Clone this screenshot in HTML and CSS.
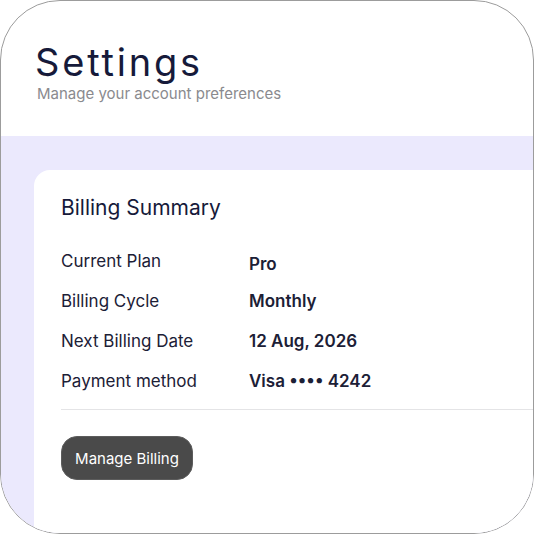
FILE: index.html
```html
<!DOCTYPE html>
<html>
<head>
<meta charset="utf-8">
<link rel="stylesheet" href="styles.css">
</head>
<body>
<div class="frame">
  <header class="page-header">
    <h1 class="title">Settings</h1>
    <p class="subtitle">Manage your account preferences</p>
  </header>
  <main class="content">
    <section class="card">
      <h2 class="card-title">Billing Summary</h2>
      <dl class="rows">
        <div class="row"><dt>Current Plan</dt><dd class="first">Pro</dd></div>
        <div class="row"><dt>Billing Cycle</dt><dd>Monthly</dd></div>
        <div class="row"><dt>Next Billing Date</dt><dd>12 Aug, 2026</dd></div>
        <div class="row"><dt>Payment method</dt><dd>Visa •••• 4242</dd></div>
      </dl>
      <div class="divider"></div>
      <button class="btn">Manage Billing</button>
    </section>
  </main>
</div>
</body>
</html>
```
FILE: styles.css
```css
* { box-sizing: border-box; }
html, body { margin: 0; padding: 0; background: #fff; }
body { font-family: Inter, "Noto Sans", sans-serif; }
.frame {
  width: 534px;
  height: 534px;
  border: 1px solid #9c9c9c;
  border-radius: 60px;
  overflow: hidden;
  background: #fff;
  display: flex;
  flex-direction: column;
}
.page-header {
  padding: 39px 0 0 34px;
  height: 135px;
}
.title {
  margin: 0;
  font-size: 38px;
  font-weight: 400;
  line-height: 45px;
  color: #161a3a;
  letter-spacing: 2.8px;
}
.subtitle {
  margin: 0 0 0 2px;
  font-size: 15px;
  line-height: 18px;
  color: #8a8a8e;
}
.content {
  flex: 1;
  background: #ebe9fd;
  padding: 34px 0 0 33px;
  display: flex;
}
.card {
  flex: 1;
  background: #fff;
  border-top-left-radius: 16px;
  padding: 24px 0 0 27px;
}
.card-title {
  margin: 0;
  font-size: 21px;
  font-weight: 400;
  line-height: 28px;
  color: #161a3a;
}
.rows { margin: 27px 0 0 0; }
.row {
  display: flex;
  height: 40px;
  align-items: flex-start;
}
.row dt {
  width: 188px;
  font-size: 17px;
  line-height: 24px;
  color: #1c2036;
}
.row dd {
  margin: 0;
  font-size: 17px;
  line-height: 24px;
  font-weight: 600;
  color: #1c2036;
}
.row dd.first { padding-top: 3px; }
.divider {
  height: 1px;
  background: #e4e4e6;
  margin-top: 0;
}
.btn {
  margin-top: 26px;
  width: 132px;
  height: 44px;
  border-radius: 16px;
  background: #4a4a4a;
  border: 1px solid #5c5c5c;
  color: #fff;
  font-family: Inter, sans-serif;
  font-size: 15px;
  padding: 0;
}
```
